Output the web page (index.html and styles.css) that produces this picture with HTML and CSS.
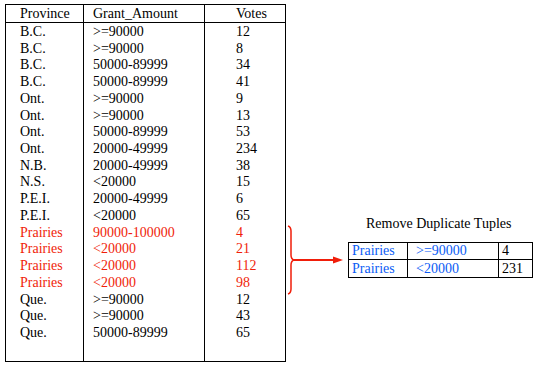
FILE: index.html
```html
<!DOCTYPE html>
<html>
<head>
<meta charset="utf-8">
<link rel="stylesheet" href="styles.css">
</head>
<body>
<div class="page">
  <div class="grants">
    <div class="col col-prov">
      <div class="head">Province</div>
      <div class="cell">B.C.</div>
      <div class="cell">B.C.</div>
      <div class="cell">B.C.</div>
      <div class="cell">B.C.</div>
      <div class="cell">Ont.</div>
      <div class="cell">Ont.</div>
      <div class="cell">Ont.</div>
      <div class="cell">Ont.</div>
      <div class="cell">N.B.</div>
      <div class="cell">N.S.</div>
      <div class="cell">P.E.I.</div>
      <div class="cell">P.E.I.</div>
      <div class="cell red">Prairies</div>
      <div class="cell red">Prairies</div>
      <div class="cell red">Prairies</div>
      <div class="cell red">Prairies</div>
      <div class="cell">Que.</div>
      <div class="cell">Que.</div>
      <div class="cell">Que.</div>
    </div>
    <div class="col col-grant">
      <div class="head">Grant_Amount</div>
      <div class="cell">&gt;=90000</div>
      <div class="cell">&gt;=90000</div>
      <div class="cell">50000-89999</div>
      <div class="cell">50000-89999</div>
      <div class="cell">&gt;=90000</div>
      <div class="cell">&gt;=90000</div>
      <div class="cell">50000-89999</div>
      <div class="cell">20000-49999</div>
      <div class="cell">20000-49999</div>
      <div class="cell">&lt;20000</div>
      <div class="cell">20000-49999</div>
      <div class="cell">&lt;20000</div>
      <div class="cell red">90000-100000</div>
      <div class="cell red">&lt;20000</div>
      <div class="cell red">&lt;20000</div>
      <div class="cell red">&lt;20000</div>
      <div class="cell">&gt;=90000</div>
      <div class="cell">&gt;=90000</div>
      <div class="cell">50000-89999</div>
    </div>
    <div class="col col-votes">
      <div class="head">Votes</div>
      <div class="cell">12</div>
      <div class="cell">8</div>
      <div class="cell">34</div>
      <div class="cell">41</div>
      <div class="cell">9</div>
      <div class="cell">13</div>
      <div class="cell">53</div>
      <div class="cell">234</div>
      <div class="cell">38</div>
      <div class="cell">15</div>
      <div class="cell">6</div>
      <div class="cell">65</div>
      <div class="cell red">4</div>
      <div class="cell red">21</div>
      <div class="cell red">112</div>
      <div class="cell red">98</div>
      <div class="cell">12</div>
      <div class="cell">43</div>
      <div class="cell">65</div>
    </div>
  </div>

  <div class="result">
    <div class="caption">Remove Duplicate Tuples</div>
    <div class="small">
      <div class="srow">
        <div class="sc sc1 blue">Prairies</div>
        <div class="sc sc2 blue">&gt;=90000</div>
        <div class="sc sc3">4</div>
      </div>
      <div class="srow">
        <div class="sc sc1 blue">Prairies</div>
        <div class="sc sc2 blue">&lt;20000</div>
        <div class="sc sc3">231</div>
      </div>
    </div>
  </div>

  <svg class="overlay" width="541" height="373" viewBox="0 0 541 373">
    <path d="M288,226 Q291,227 291,231 L291,255 Q291,259 294,260 Q291,261 291,265 L291,289 Q291,293 288,294" fill="none" stroke="#f01e0a" stroke-width="1.5"/>
    <line x1="294" y1="260" x2="336" y2="260" stroke="#f01e0a" stroke-width="2"/>
    <polygon points="333,256.5 343,260 333,263.5" fill="#f01e0a"/>
  </svg>
</div>
</body>
</html>
```

FILE: styles.css
```css
html, body {
  margin: 0;
  padding: 0;
  background: #fff;
}

.page {
  position: relative;
  width: 541px;
  height: 373px;
  display: flex;
  align-items: flex-start;
  font-family: "Liberation Serif", "Times New Roman", serif;
  font-size: 14px;
  color: #000;
}

.grants {
  margin-left: 5px;
  margin-top: 4px;
  border: 1px solid #000;
  height: 356px;
  display: flex;
}

.col {
  display: flex;
  flex-direction: column;
}

.col-prov {
  width: 77px;
  border-right: 1px solid #000;
}

.col-grant {
  width: 120px;
  border-right: 1px solid #000;
}

.col-votes {
  width: 80px;
}

.head {
  height: 17px;
  line-height: 18px;
  border-bottom: 1px solid #000;
  white-space: nowrap;
}

.cell {
  height: 16.72px;
  line-height: 18px;
  white-space: nowrap;
}

.col-prov .head,
.col-prov .cell {
  padding-left: 14px;
}

.col-grant .head,
.col-grant .cell {
  padding-left: 9px;
}

.col-votes .head,
.col-votes .cell {
  padding-left: 31px;
}

.red {
  color: #f01e0a;
}

.blue {
  color: #0a5cf5;
}

.result {
  margin-left: 62px;
  margin-top: 215px;
  display: flex;
  flex-direction: column;
}

.caption {
  padding-left: 18px;
  height: 18px;
  line-height: 18px;
  margin-bottom: 9px;
  white-space: nowrap;
}

.small {
  width: 183px;
  border: 1px solid #000;
  display: flex;
  flex-direction: column;
}

.srow {
  display: flex;
  height: 16px;
  line-height: 16px;
}

.srow + .srow {
  border-top: 1px solid #000;
  height: 17px;
  line-height: 17px;
}

.sc {
  white-space: nowrap;
}

.sc1 {
  width: 55px;
  padding-left: 3px;
  border-right: 1px solid #000;
}

.sc2 {
  width: 82px;
  padding-left: 8px;
  border-right: 1px solid #000;
}

.sc3 {
  width: 30px;
  padding-left: 3px;
}

.overlay {
  position: absolute;
  left: 0;
  top: 0;
  pointer-events: none;
}
```
